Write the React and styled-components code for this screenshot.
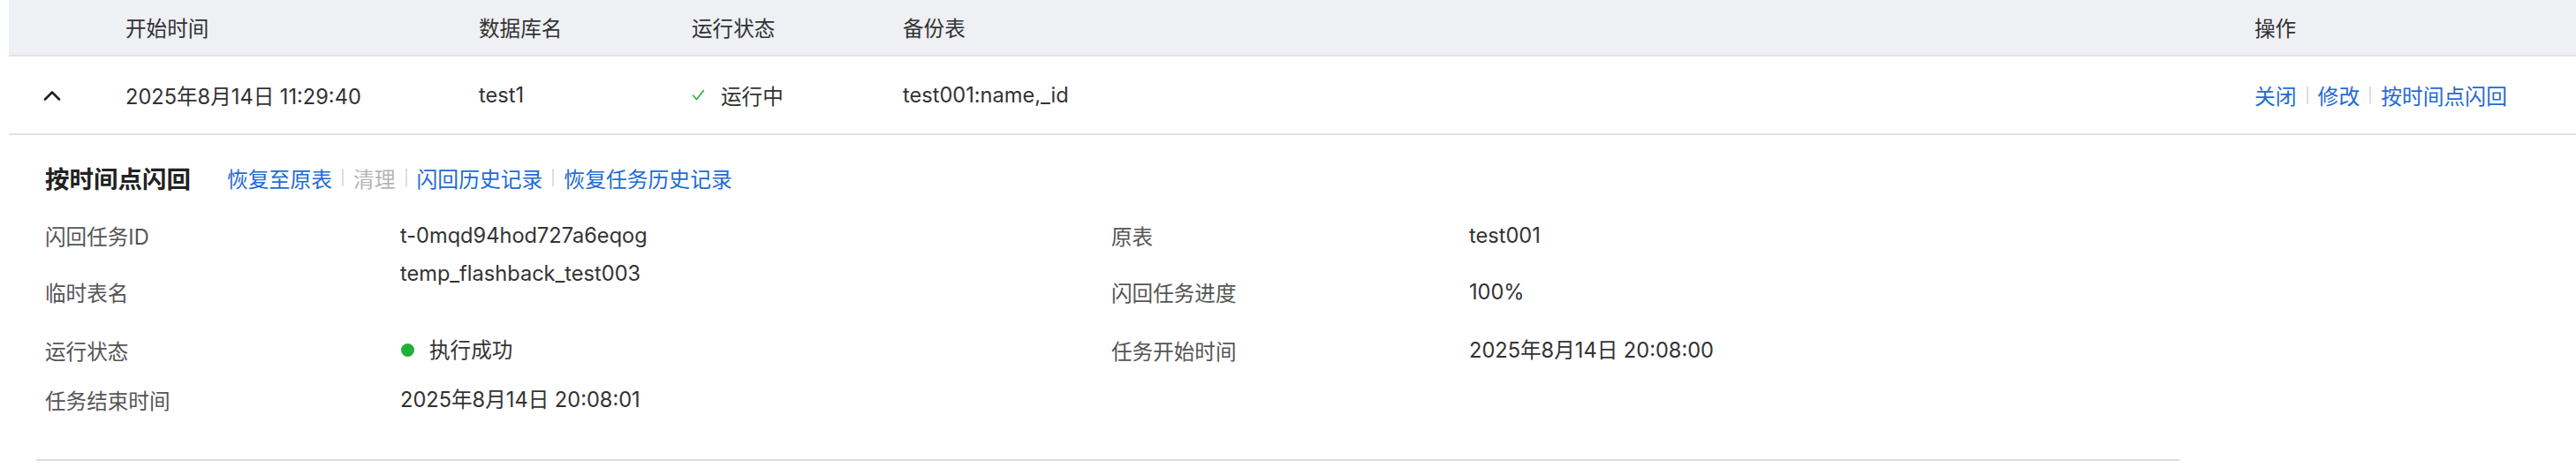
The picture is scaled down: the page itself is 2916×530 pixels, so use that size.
import styled, { createGlobalStyle } from "styled-components";

const GlobalStyle = createGlobalStyle`
  body {
    margin: 0;
    background: #fff;
    font-family: Inter, "Noto Sans CJK SC", sans-serif;
  }
`;

const Page = styled.div`
  width: 2916px;
  height: 530px;
  padding-left: 10px;
  box-sizing: border-box;
  overflow: hidden;
  background: #fff;
`;

const COLS = "108px 400px 241px 239px 1530px 1fr";

const HeadRow = styled.div`
  display: grid;
  grid-template-columns: ${COLS};
  height: 62px;
  align-items: center;
  background: #eef0f4;
  border-bottom: 2px solid #e2e3e6;
`;

const HeadCell = styled.div`
  padding-left: 24px;
  font-size: 23.6px;
  color: #333;
`;

const DataRow = styled.div`
  display: grid;
  grid-template-columns: ${COLS};
  height: 87px;
  align-items: center;
  border-bottom: 2px solid #e4e4e4;
`;

const Cell = styled.div`
  padding-left: 24px;
  font-size: 23.6px;
  color: #333;
  display: flex;
  align-items: center;
`;

const ExpandCell = styled.div`
  padding-left: 39px;
  display: flex;
  align-items: center;
`;

const StatusText = styled.span`
  margin-left: 18px;
`;

const Actions = styled.div`
  display: flex;
  align-items: center;
`;

const LinkText = styled.span`
  color: ${({ $disabled }) => ($disabled ? "#b5b5b5" : "#1f6bd6")};
  font-size: 23.8px;
  cursor: pointer;
  white-space: nowrap;
`;

const Sep = styled.span`
  display: inline-block;
  width: 2px;
  height: 20px;
  background: #dedede;
  margin: 0 11px;
`;

const Expanded = styled.div`
  padding-left: 31px;
`;

const Panel = styled.div`
  width: 2426px;
  box-sizing: border-box;
  padding: 28px 0 40px 10px;
  border-bottom: 2px solid #dcdcdc;
`;

const TitleBar = styled.div`
  display: flex;
  align-items: center;
  height: 40px;
  margin-bottom: 18px;
`;

const Title = styled.h3`
  margin: 0 41px 0 0;
  font-size: 27.5px;
  font-weight: 700;
  color: #222;
`;

const Desc = styled.div`
  display: grid;
  grid-template-columns: 402px 805px 405px 1fr;
  grid-template-rows: 55px 74px 57px 55px;
  font-size: 23.6px;
`;

const Label = styled.div`
  color: #555;
  display: flex;
  align-items: center;
`;

const Value = styled.div`
  color: #333;
  display: flex;
  align-items: ${({ $top }) => ($top ? "flex-start" : "center")};
  line-height: 32px;
`;

const Dot = styled.span`
  width: 15px;
  height: 15px;
  border-radius: 50%;
  background: #1fb135;
  margin: 0 17px 0 1px;
`;

const Chevron = () => (
  <svg width="20" height="12" viewBox="0 0 20 12">
    <path d="M2 10.5 L10 2.5 L18 10.5" fill="none" stroke="#222" strokeWidth="2.6" strokeLinecap="round" strokeLinejoin="round" />
  </svg>
);

const Check = () => (
  <svg width="15" height="13" viewBox="0 0 15 13">
    <path d="M1.5 7 L5.5 11.5 L13.5 1.5" fill="none" stroke="#23b03a" strokeWidth="1.6" strokeLinecap="round" strokeLinejoin="round" />
  </svg>
);

const details = [
  ["闪回任务ID", "t-0mqd94hod727a6eqog", "原表", "test001"],
  ["临时表名", "temp_flashback_test003", "闪回任务进度", "100%"],
  ["运行状态", "status", "任务开始时间", "2025年8月14日 20:08:00"],
  ["任务结束时间", "2025年8月14日 20:08:01"],
];

export default function App() {
  return (
    <Page>
      <GlobalStyle />
      <HeadRow>
        <HeadCell />
        <HeadCell>开始时间</HeadCell>
        <HeadCell>数据库名</HeadCell>
        <HeadCell>运行状态</HeadCell>
        <HeadCell>备份表</HeadCell>
        <HeadCell>操作</HeadCell>
      </HeadRow>
      <DataRow>
        <ExpandCell>
          <Chevron />
        </ExpandCell>
        <Cell>2025年8月14日 11:29:40</Cell>
        <Cell>test1</Cell>
        <Cell>
          <Check />
          <StatusText>运行中</StatusText>
        </Cell>
        <Cell>test001:name,_id</Cell>
        <Cell>
          <Actions>
            <LinkText>关闭</LinkText>
            <Sep />
            <LinkText>修改</LinkText>
            <Sep />
            <LinkText>按时间点闪回</LinkText>
          </Actions>
        </Cell>
      </DataRow>
      <Expanded>
        <Panel>
          <TitleBar>
            <Title>按时间点闪回</Title>
            <Actions>
              <LinkText>恢复至原表</LinkText>
              <Sep />
              <LinkText $disabled>清理</LinkText>
              <Sep />
              <LinkText>闪回历史记录</LinkText>
              <Sep />
              <LinkText>恢复任务历史记录</LinkText>
            </Actions>
          </TitleBar>
          <Desc>
            {details.map(([l1, v1, l2, v2], i) => (
              <>
                <Label key={`l1-${i}`}>{l1}</Label>
                <Value key={`v1-${i}`} $top={i === 1}>
                  {v1 === "status" ? (
                    <>
                      <Dot />
                      执行成功
                    </>
                  ) : (
                    v1
                  )}
                </Value>
                {l2 && <Label key={`l2-${i}`}>{l2}</Label>}
                {l2 && <Value key={`v2-${i}`}>{v2}</Value>}
                {!l2 && <div key={`e1-${i}`} />}
                {!l2 && <div key={`e2-${i}`} />}
              </>
            ))}
          </Desc>
        </Panel>
      </Expanded>
    </Page>
  );
}
